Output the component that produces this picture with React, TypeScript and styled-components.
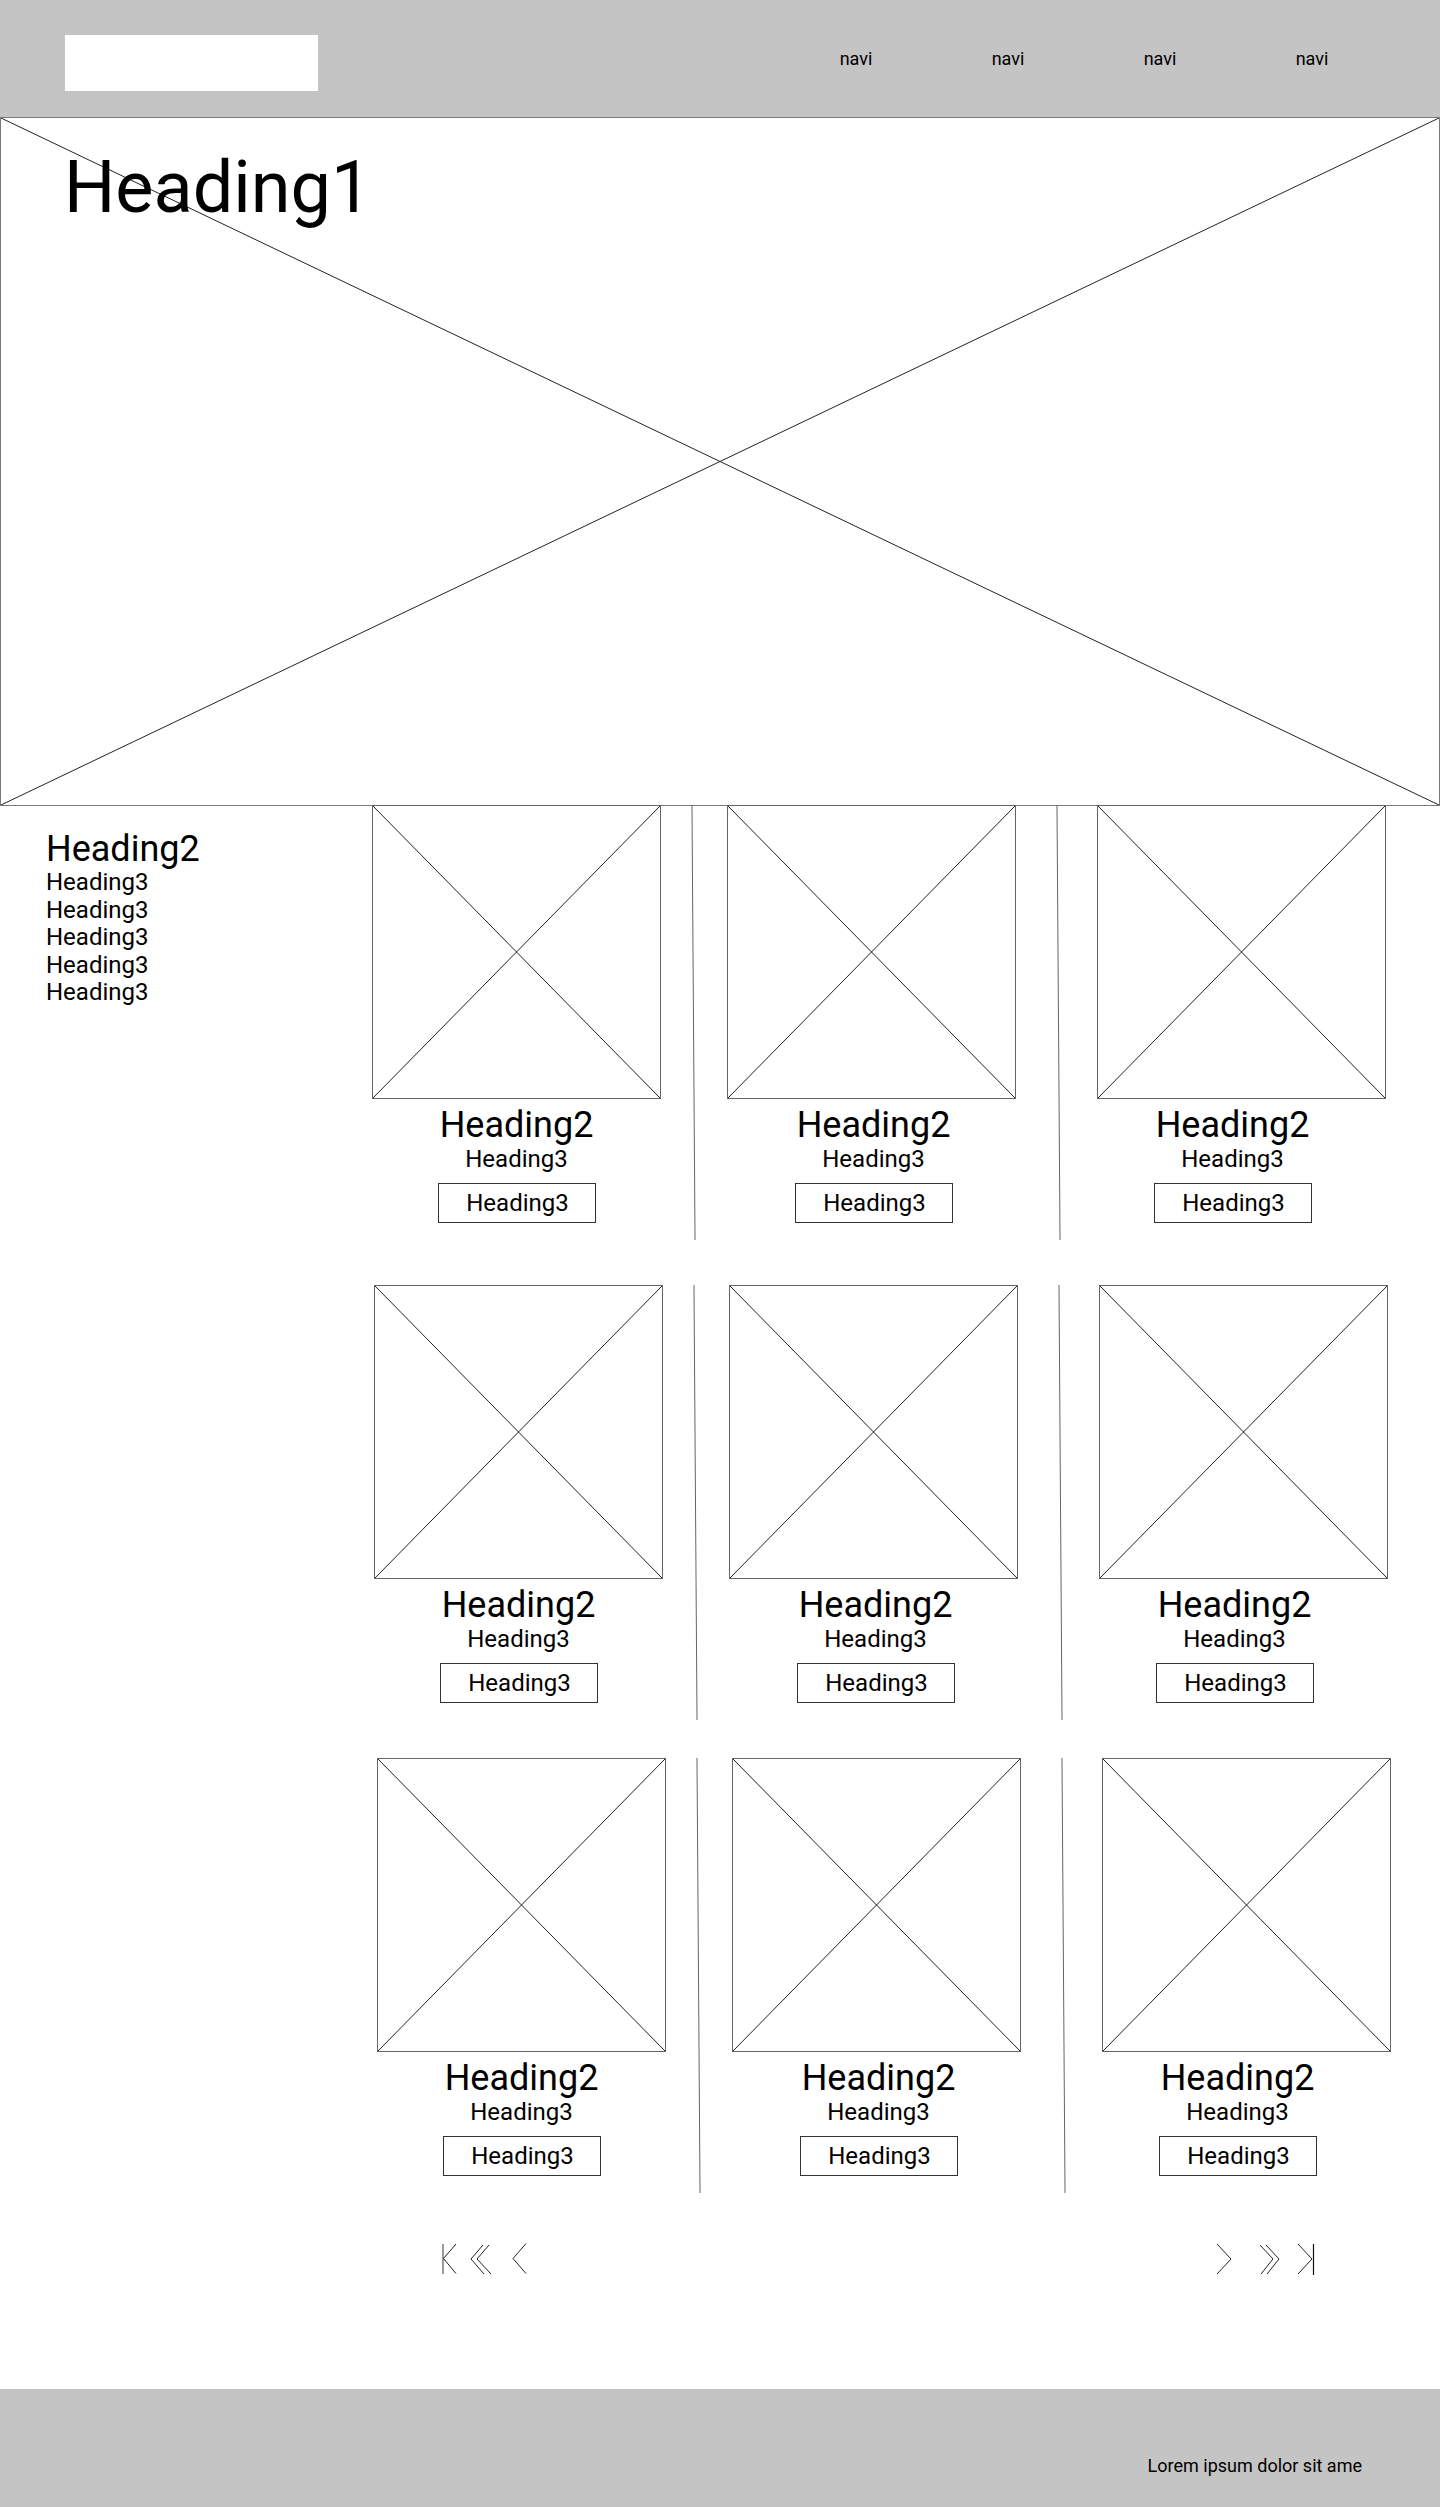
import React from "react";
import styled, { createGlobalStyle } from "styled-components";

const GlobalStyle = createGlobalStyle`
  html, body { margin: 0; padding: 0; background: #fff; }
  body { font-family: Roboto, "Liberation Sans", Arial, sans-serif; color: #000; }
  *, *::before, *::after { box-sizing: border-box; }
`;

const Page = styled.div`
  width: 1440px;
  display: flex;
  flex-direction: column;
`;

const Header = styled.header`
  height: 117px;
  background: #c4c4c4;
  display: flex;
  align-items: flex-start;
  padding: 35px 52px 0 65px;
`;

const Logo = styled.div`
  width: 253px;
  height: 56px;
  background: #fff;
`;

const Nav = styled.nav`
  margin-left: auto;
  margin-top: 15px;
  display: flex;
`;

const NavItem = styled.a`
  width: 152px;
  text-align: center;
  font-size: 18px;
  line-height: 1;
  color: #000;
  text-decoration: none;
`;

const Hero = styled.section`
  position: relative;
  height: 689px;
  border: 1px solid #7a7a7a;
  padding: 34px 0 0 63px;
`;

const CrossLayer = styled.svg`
  position: absolute;
  inset: 0;
  width: 100%;
  height: 100%;
  pointer-events: none;
`;

const Heading1 = styled.h1`
  position: relative;
  margin: 0;
  font-size: 72px;
  font-weight: 400;
  line-height: 1;
`;

const Main = styled.main`
  display: flex;
  margin-top: -1px;
`;

const Sidebar = styled.aside`
  width: 372px;
  flex: none;
  padding: 26px 0 0 46px;
`;

const SideTitle = styled.h2`
  margin: 0 0 2px;
  font-size: 36px;
  font-weight: 400;
  line-height: 1;
`;

const SideList = styled.ul`
  list-style: none;
  margin: 0;
  padding: 0;
`;

const SideItem = styled.li`
  font-size: 24px;
  line-height: 27.5px;
`;

const Content = styled.div`
  flex: 1;
  display: flex;
  flex-direction: column;
`;

const Row = styled.div<{ $indent: number; $top: number }>`
  display: flex;
  align-items: flex-start;
  padding-left: ${(p) => p.$indent}px;
  margin-top: ${(p) => p.$top}px;
`;

const Card = styled.article`
  width: 289px;
  flex: none;
  display: flex;
  flex-direction: column;
  align-items: center;
`;

const Thumb = styled.div`
  position: relative;
  width: 289px;
  height: 294px;
  border: 1px solid #666;
`;

const CardBody = styled.div<{ $shift: number }>`
  width: 100%;
  display: flex;
  flex-direction: column;
  align-items: center;
  padding-left: ${(p) => Math.max(0, p.$shift * 2)}px;
  padding-right: ${(p) => Math.max(0, -p.$shift * 2)}px;
`;

const CardTitle = styled.h2`
  margin: 8px 0 0;
  font-size: 36px;
  font-weight: 400;
  line-height: 1;
`;

const CardSub = styled.h3`
  margin: 4px 0 0;
  font-size: 24px;
  font-weight: 400;
  line-height: 1;
`;

const CardButton = styled.button`
  margin-top: 12px;
  width: 158px;
  padding: 7px 0 7px 2px;
  border: 1px solid #333;
  background: #fff;
  font-family: inherit;
  font-size: 24px;
  line-height: 1;
  color: #000;
`;

const Divider = styled.div<{ $before: number; $after: number }>`
  flex: none;
  width: 1px;
  height: 435px;
  background: #666;
  margin: 0 ${(p) => p.$after}px 0 ${(p) => p.$before}px;
  transform: rotate(-0.4deg);
`;

const Pager = styled.nav`
  display: flex;
  justify-content: space-between;
  margin-top: 50px;
  padding: 0 125px 0 70px;
`;

const PagerGroup = styled.div`
  display: flex;
  align-items: flex-start;
`;

const PagerButton = styled.button<{ $gap: number }>`
  display: flex;
  padding: 0;
  margin: 0 0 0 ${(p) => p.$gap}px;
  border: none;
  background: none;
`;

const Footer = styled.footer`
  margin-top: 114px;
  height: 118px;
  background: #c4c4c4;
  display: flex;
  justify-content: flex-end;
  padding: 68px 78px 0 0;
`;

const FooterText = styled.p`
  margin: 0;
  font-size: 18px;
  line-height: 1;
`;

const Cross = () => (
  <CrossLayer>
    <line x1="0" y1="0" x2="100%" y2="100%" stroke="#222" strokeWidth="1" />
    <line x1="0" y1="100%" x2="100%" y2="0" stroke="#222" strokeWidth="1" />
  </CrossLayer>
);

const stroke = { fill: "none", stroke: "#222", strokeWidth: 1 } as const;

const FirstIcon = () => (
  <svg width="15" height="32" viewBox="0 0 15 32">
    <line x1="1" y1="1" x2="1" y2="31" stroke="#808080" strokeWidth="1.6" />
    <polyline points="14,1 1.5,15.5 14,30.5" {...stroke} />
  </svg>
);

const PrevDoubleIcon = () => (
  <svg width="22" height="32" viewBox="0 0 22 32">
    <polyline points="13,2 1,16 14,31" {...stroke} />
    <polyline points="19,2 7,16 21,31" {...stroke} />
  </svg>
);

const PrevIcon = () => (
  <svg width="15" height="32" viewBox="0 0 15 32">
    <polyline points="14,0.5 1,15.5 14,30.5" {...stroke} />
  </svg>
);

const NextIcon = () => (
  <svg width="16" height="32" viewBox="0 0 16 32">
    <polyline points="1,1 15,16 1,31" {...stroke} />
  </svg>
);

const NextDoubleIcon = () => (
  <svg width="24" height="32" viewBox="0 0 24 32">
    <polyline points="9,2 22,16 10,31" {...stroke} />
    <polyline points="3,2 16,16 4,31" {...stroke} />
  </svg>
);

const LastIcon = () => (
  <svg width="18" height="32" viewBox="0 0 18 32">
    <polyline points="1,1 15,16 1,31" {...stroke} />
    <line x1="16.5" y1="1" x2="16.5" y2="32" stroke="#111" strokeWidth="1.2" />
  </svg>
);

const shifts = [0, 2, -9];
const rows = [
  { indent: 0, top: 0 },
  { indent: 2, top: 45 },
  { indent: 5, top: 38 },
];

const ProductCard = ({ shift }: { shift: number }) => (
  <Card>
    <Thumb>
      <Cross />
    </Thumb>
    <CardBody $shift={shift}>
      <CardTitle>Heading2</CardTitle>
      <CardSub>Heading3</CardSub>
      <CardButton>Heading3</CardButton>
    </CardBody>
  </Card>
);

export default function App() {
  return (
    <>
      <GlobalStyle />
      <Page>
        <Header>
          <Logo />
          <Nav>
            {["navi", "navi", "navi", "navi"].map((n, i) => (
              <NavItem key={i} href="#">
                {n}
              </NavItem>
            ))}
          </Nav>
        </Header>
        <Hero>
          <Cross />
          <Heading1>Heading1</Heading1>
        </Hero>
        <Main>
          <Sidebar>
            <SideTitle>Heading2</SideTitle>
            <SideList>
              {[0, 1, 2, 3, 4].map((i) => (
                <SideItem key={i}>Heading3</SideItem>
              ))}
            </SideList>
          </Sidebar>
          <Content>
            {rows.map((r, i) => (
              <Row key={i} $indent={r.indent} $top={r.top}>
                <ProductCard shift={shifts[0]} />
                <Divider $before={32} $after={33} />
                <ProductCard shift={shifts[1]} />
                <Divider $before={42} $after={38} />
                <ProductCard shift={shifts[2]} />
              </Row>
            ))}
            <Pager>
              <PagerGroup>
                <PagerButton $gap={0} aria-label="first">
                  <FirstIcon />
                </PagerButton>
                <PagerButton $gap={13} aria-label="previous page group">
                  <PrevDoubleIcon />
                </PagerButton>
                <PagerButton $gap={20} aria-label="previous">
                  <PrevIcon />
                </PagerButton>
              </PagerGroup>
              <PagerGroup>
                <PagerButton $gap={0} aria-label="next">
                  <NextIcon />
                </PagerButton>
                <PagerButton $gap={25} aria-label="next page group">
                  <NextDoubleIcon />
                </PagerButton>
                <PagerButton $gap={16} aria-label="last">
                  <LastIcon />
                </PagerButton>
              </PagerGroup>
            </Pager>
          </Content>
        </Main>
        <Footer>
          <FooterText>Lorem ipsum dolor sit ame</FooterText>
        </Footer>
      </Page>
    </>
  );
}
